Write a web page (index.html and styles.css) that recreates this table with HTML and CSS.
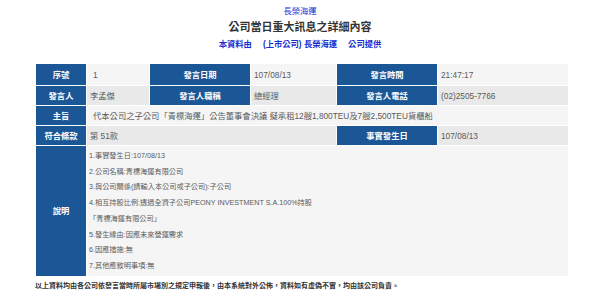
FILE: index.html
```html
<!DOCTYPE html>
<html lang="zh-Hant">
<head>
<meta charset="utf-8">
<title>公司當日重大訊息之詳細內容</title>
<link rel="stylesheet" href="styles.css">
</head>
<body>
<div class="page">
  <div class="company">長榮海運</div>
  <h1 class="title">公司當日重大訊息之詳細內容</h1>
  <div class="source"><span>本資料由</span><span>(上市公司) 長榮海運</span><span>公司提供</span></div>
  <table class="detail">
    <colgroup>
      <col class="w1"><col class="w2"><col class="w3"><col class="w4"><col class="w5"><col class="w6">
    </colgroup>
    <tr class="odd r1">
      <th>序號</th>
      <td class="pad">1</td>
      <th>發言日期</th>
      <td>107/08/13</td>
      <th>發言時間</th>
      <td>21:47:17</td>
    </tr>
    <tr class="even">
      <th>發言人</th>
      <td>李孟傑</td>
      <th>發言人職稱</th>
      <td>總經理</td>
      <th>發言人電話</th>
      <td>(02)2505-7766</td>
    </tr>
    <tr class="odd">
      <th>主旨</th>
      <td colspan="5" class="pad">代本公司之子公司「青標海運」公告董事會決議 擬承租12艘1,800TEU及7艘2,500TEU貨櫃船</td>
    </tr>
    <tr class="even">
      <th>符合條款</th>
      <td colspan="3">第 51款</td>
      <th>事實發生日</th>
      <td>107/08/13</td>
    </tr>
    <tr class="odd desc-row">
      <th>說明</th>
      <td colspan="5" class="desc">1.事實發生日:107/08/13<br>2.公司名稱:青標海運有限公司<br>3.與公司關係(請輸入本公司或子公司):子公司<br>4.相互持股比例:透過全資子公司PEONY INVESTMENT S.A.100%持股<br>「青標海運有限公司」<br>5.發生緣由:因應未來營運需求<br>6.因應措施:無<br>7.其他應敘明事項:無</td>
    </tr>
  </table>
  <p class="note">以上資料均由各公司依發言當時所屬市場別之規定申報後，由本系統對外公佈，資料如有虛偽不實，均由該公司負責。</p>
</div>
</body>
</html>
```
FILE: styles.css
```css
html, body {
  margin: 0;
  padding: 0;
  background: #ffffff;
}
.page {
  width: 600px;
  font-family: "Liberation Sans", "Noto Sans CJK TC", sans-serif;
  padding-top: 3px;
}
.company {
  text-align: center;
  color: #1a2fd0;
  font-size: 8.3px;
  line-height: 16px;
  height: 16px;
}
.title {
  margin: 0;
  text-align: center;
  color: #333333;
  font-size: 11px;
  font-weight: bold;
  line-height: 17px;
}
.source {
  display: flex;
  justify-content: center;
  gap: 11px;
  color: #1a2fd0;
  font-size: 8.3px;
  font-weight: bold;
  line-height: 16px;
  margin-bottom: 11px;
}
.detail {
  margin-left: 35px;
  width: 533px;
  border-collapse: collapse;
  border: 1px solid #a9a9a9;
  table-layout: fixed;
  font-size: 8.3px;
}
.detail .w1 { width: 51px; }
.detail .w2 { width: 63px; }
.detail .w3 { width: 101px; }
.detail .w4 { width: 86px; }
.detail .w5 { width: 101px; }
.detail .w6 { width: 131px; }
.detail th,
.detail td {
  box-sizing: border-box;
  border: 1px solid #ffffff;
  padding: 0 3px;
  height: 20px;
  line-height: 12px;
  vertical-align: middle;
  white-space: nowrap;
}
.detail th {
  background: #1b5796;
  color: #ffffff;
  font-weight: bold;
  text-align: center;
}
.detail td {
  color: #5a5a5a;
  text-align: left;
}
.detail tr.r1 th,
.detail tr.r1 td {
  height: 22px;
}
.odd td { background: #f5f5f5; }
.even td { background: #e9e9e9; }
.detail td.pad { padding-left: 6px; }
.detail td.desc {
  font-size: 7.2px;
  line-height: 15.7px;
  padding: 2px 2px;
  height: auto;
}
.note {
  margin: 3px 0 0 35px;
  font-size: 7px;
  line-height: 12px;
  color: #333333;
  font-weight: bold;
}
```
